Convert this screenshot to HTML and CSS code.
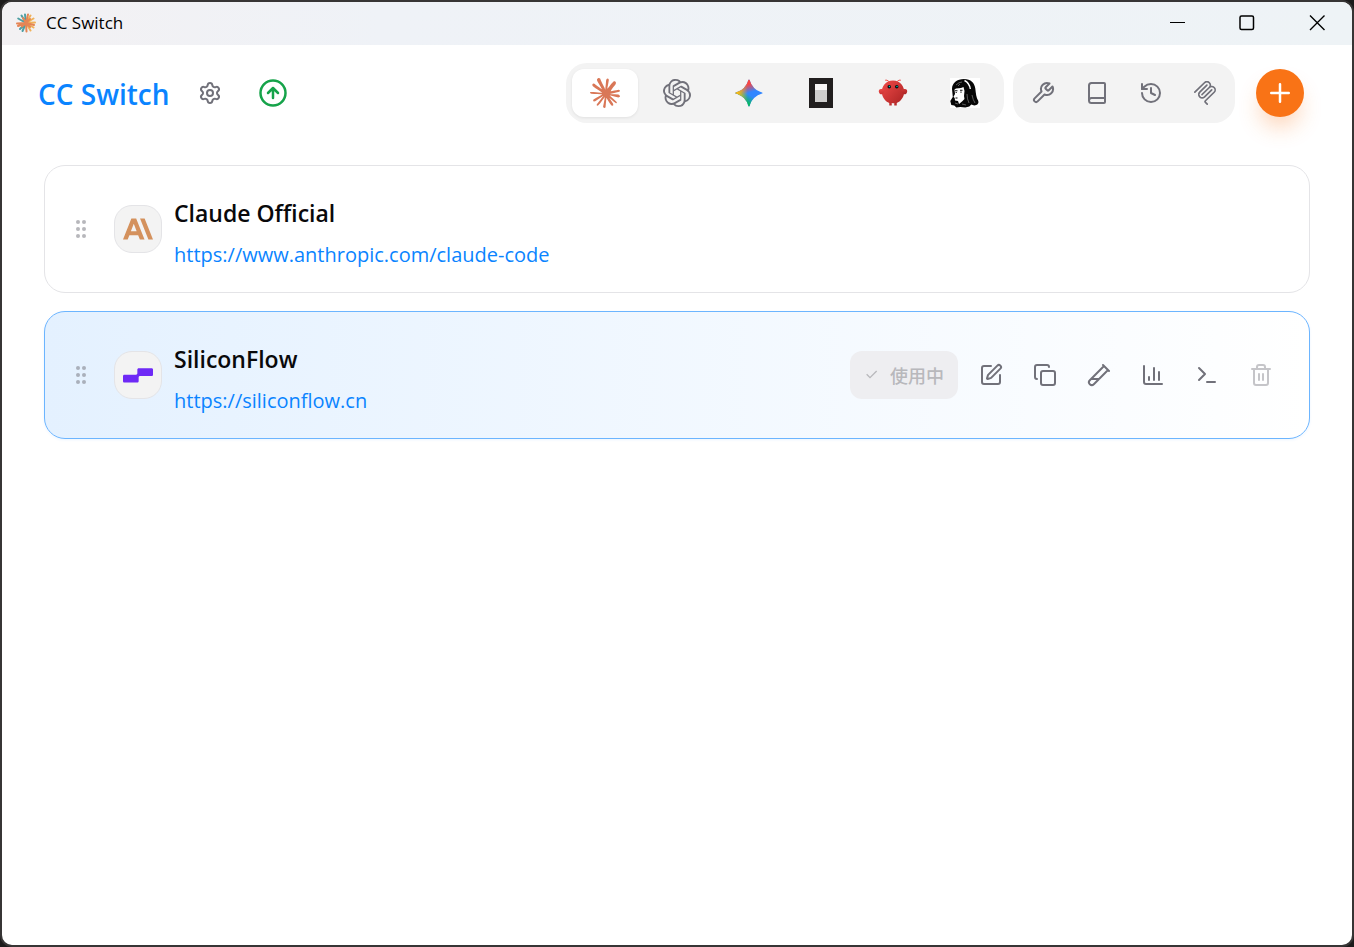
FILE: index.html
```
<!DOCTYPE html>
<html lang="zh-CN">
<head>
<meta charset="utf-8">
<title>CC Switch</title>
<link rel="stylesheet" href="styles.css">
</head>
<body>
<div class="window">
  <div class="titlebar">
    <svg class="app-icon" viewBox="0 0 20 20" fill="none" stroke-width="2" stroke-linecap="round">
      <path stroke="#4f9fa3" d="M10 10 9 1.500M10 10 5.500 2.500M10 10 2.200 5.500M10 10 4 16M10 10 6.500 18"/>
      <path stroke="#f0b25a" d="M10 10 14.500 2.500M10 10 17.500 5.500M10 10 19 9.500M10 10 17.500 14.500M10 10 14.500 17.500"/>
      <path stroke="#e58555" d="M10 10 12 1.500M10 10 1 10.500M10 10 2 13M10 10 10.500 18.500M10 10 18 12M10 10 7 5M10 10 14 6M10 10 6 13.500M10 10 14 14"/>
    </svg>
    <span class="titlebar-text">CC Switch</span>
    <div class="window-controls">
      <button type="button" class="win-btn" aria-label="Minimize"><svg viewBox="0 0 16 16"><path d="M1 7.500h15"/></svg></button>
      <button type="button" class="win-btn" aria-label="Maximize"><svg viewBox="0 0 16 16"><rect x="1" y="1" width="13.500" height="13.500" rx="1.500" stroke-width="1.500"/></svg></button>
      <button type="button" class="win-btn" aria-label="Close"><svg viewBox="0 0 16 16"><path stroke-width="1.400" d="M1 .5l14.500 14.500M15.500 .5 1 15"/></svg></button>
    </div>
  </div>

  <header class="header">
    <a class="brand" href="#">CC Switch</a>
    <button type="button" class="icon-btn" aria-label="Settings">
      <svg class="line" viewBox="0 0 24 24"><path d="M9.671 4.136a2.340 2.340 0 0 1 4.659 0 2.340 2.340 0 0 0 3.319 1.915 2.340 2.340 0 0 1 2.330 4.033 2.340 2.340 0 0 0 0 3.831 2.340 2.340 0 0 1-2.330 4.033 2.340 2.340 0 0 0-3.319 1.915 2.340 2.340 0 0 1-4.659 0 2.340 2.340 0 0 0-3.320-1.915 2.340 2.340 0 0 1-2.330-4.033 2.340 2.340 0 0 0 0-3.831A2.340 2.340 0 0 1 6.350 6.051a2.340 2.340 0 0 0 3.319-1.915"/><circle cx="12" cy="12" r="3"/></svg>
    </button>
    <button type="button" class="icon-btn update" aria-label="Update">
      <svg class="line large" viewBox="0 0 24 24"><circle cx="12" cy="12" r="10"/><path d="m16 12-4-4-4 4M12 16V8"/></svg>
    </button>

    <nav class="group apps" aria-label="Apps">
      <button type="button" class="app-tab active" aria-label="Claude">
        <svg class="logo" viewBox="0 0 24 24" fill="#d97757"><path d="m4.7144 15.9555 4.7174-2.6471.079-.2307-.079-.1275h-.2307l-.7893-.0486-2.6956-.0729-2.3375-.0971-2.2646-.1214-.5707-.1215-.5343-.7042.0546-.3522.4797-.3218.686.0608 1.5179.1032 2.2767.1578 1.6514.0972 2.4468.255h.3886l.0546-.1579-.1336-.0971-.1032-.0972L6.973 9.8356l-2.55-1.6879-1.3356-.9714-.7225-.4918-.3643-.4614-.1578-1.0078.6557-.7225.8803.0607.2246.0607.8925.686 1.9064 1.4754 2.4893 1.8336.3643.3035.1457-.1032.0182-.0728-.164-.2733-1.3539-2.4467-1.445-2.4893-.6435-1.032-.17-.6194c-.0607-.255-.1032-.4674-.1032-.7285L6.287.1335 6.6997 0l.9957.1336.419.3642.6192 1.4147 1.0018 2.2282 1.5543 3.0296.4553.8985.2429.8318.091.255h.1579v-.1457l.1275-1.706.2368-2.0947.2307-2.6957.0789-.7589.3764-.9107.7468-.4918.5828.2793.4797.686-.0668.4433-.2853 1.8517-.5586 2.9021-.3643 1.9429h.2125l.2429-.2429.9835-1.3053 1.6514-2.0643.7286-.8196.85-.9046.5464-.4311h1.0321l.759 1.1293-.34 1.1657-1.0625 1.3478-.8804 1.1414-1.2628 1.7-.7893 1.36.0729.1093.1882-.0183 2.8535-.607 1.5421-.2794 1.8396-.3157.8318.3886.091.3946-.3278.8075-1.967.4857-2.3072.4614-3.4364.8136-.0425.0304.0486.0607 1.5482.1457.6618.0364h1.621l3.0175.2247.7892.522.4736.6376-.079.4857-1.2142.6193-1.6393-.3886-3.825-.9107-1.3113-.3279h-.1822v.1093l1.0929 1.0686 2.0035 1.8092 2.5075 2.3314.1275.5768-.3218.4554-.34-.0486-2.2039-1.6575-.85-.7468-1.9246-1.621h-.1275v.17l.4432.6496 2.3436 3.5214.1214 1.0807-.17.3521-.6071.2125-.6679-.1214-1.3721-1.9246L14.38 17.959l-1.1414-1.9428-.1397.079-.674 7.2552-.3156.3703-.7286.2793-.6071-.4614-.3218-.7468.3218-1.4753.3886-1.9246.3157-1.53.2853-1.9004.17-.6314-.0121-.0425-.1397.0182-1.4328 1.9672-2.1796 2.9446-1.7243 1.8456-.4128.164-.7164-.3704.0667-.6618.4008-.5889 2.386-3.0357 1.4389-1.882.929-1.0868-.0062-.1579h-.0546l-6.3385 4.1164-1.1293.1457-.4857-.4554.0608-.7467.2307-.2429 1.9064-1.3114Z"/></svg>
      </button>
      <button type="button" class="app-tab" aria-label="Codex">
        <svg class="logo" viewBox="-.8 -.8 25.600 25.600" fill="currentColor"><path d="M22.2819 9.8211a5.9847 5.9847 0 0 0-.5157-4.9108 6.0462 6.0462 0 0 0-6.5098-2.9A6.0651 6.0651 0 0 0 4.9807 4.1818a5.9847 5.9847 0 0 0-3.9977 2.9 6.0462 6.0462 0 0 0 .7427 7.0966 5.98 5.98 0 0 0 .511 4.9107 6.051 6.051 0 0 0 6.5146 2.9001A5.9847 5.9847 0 0 0 13.2599 24a6.0557 6.0557 0 0 0 5.7718-4.2058 5.9894 5.9894 0 0 0 3.9977-2.9001 6.0557 6.0557 0 0 0-.7475-7.073zm-9.022 12.6081a4.4755 4.4755 0 0 1-2.8764-1.0408l.1419-.0804 4.7783-2.7582a.7948.7948 0 0 0 .3927-.6813v-6.7369l2.02 1.1686a.071.071 0 0 1 .038.052v5.5826a4.504 4.504 0 0 1-4.4945 4.4944zm-9.6607-4.1254a4.4708 4.4708 0 0 1-.5346-3.0137l.142.0852 4.783 2.7582a.7712.7712 0 0 0 .7806 0l5.8428-3.3685v2.3324a.0804.0804 0 0 1-.0332.0615L9.74 19.9502a4.4992 4.4992 0 0 1-6.1408-1.6464zM2.3408 7.8956a4.485 4.485 0 0 1 2.3655-1.9728V11.6a.7664.7664 0 0 0 .3879.6765l5.8144 3.3543-2.0201 1.1685a.0757.0757 0 0 1-.071 0l-4.8303-2.7865A4.504 4.504 0 0 1 2.3408 7.872zm16.5963 3.8558L13.1038 8.364 15.1192 7.2a.0757.0757 0 0 1 .071 0l4.8303 2.7913a4.4944 4.4944 0 0 1-.6765 8.1042v-5.6772a.79.79 0 0 0-.407-.667zm2.0107-3.0231l-.142-.0852-4.7735-2.7818a.7759.7759 0 0 0-.7854 0L9.409 9.2297V6.8974a.0662.0662 0 0 1 .0284-.0615l4.8303-2.7866a4.4992 4.4992 0 0 1 6.6802 4.66zM8.3065 12.863l-2.02-1.1638a.0804.0804 0 0 1-.038-.0567V6.0742a4.4992 4.4992 0 0 1 7.3757-3.4537l-.142.0805L8.704 5.459a.7948.7948 0 0 0-.3927.6813zm1.0976-2.3654l2.602-1.4998 2.6069 1.4998v2.9994l-2.5974 1.4997-2.6067-1.4997Z"/></svg>
      </button>
      <button type="button" class="app-tab" aria-label="Gemini">
        <svg class="logo" viewBox="-.2 -.2 24.400 24.400">
          <defs>
            <linearGradient id="gm-g" x1="9" y1="19" x2="12.500" y2="13.500" gradientUnits="userSpaceOnUse"><stop stop-color="#08b962"/><stop offset="1" stop-color="#08b962" stop-opacity="0"/></linearGradient>
            <linearGradient id="gm-r" x1="11" y1="5" x2="13" y2="11.500" gradientUnits="userSpaceOnUse"><stop stop-color="#f94543"/><stop offset="1" stop-color="#f94543" stop-opacity="0"/></linearGradient>
            <linearGradient id="gm-y" x1="3" y1="12" x2="11" y2="12" gradientUnits="userSpaceOnUse"><stop stop-color="#fabc12"/><stop offset="1" stop-color="#fabc12" stop-opacity="0"/></linearGradient>
            <path id="gm" d="M20.616 10.835a14.147 14.147 0 01-4.450-3.001 14.111 14.111 0 01-3.678-6.452.503.503 0 00-.975 0 14.134 14.134 0 01-3.679 6.452 14.155 14.155 0 01-4.450 3.001c-.650.280-1.318.505-2.002.678a.502.502 0 000 .975c.684.172 1.350.397 2.002.677a14.147 14.147 0 014.450 3.001 14.112 14.112 0 013.679 6.453.502.502 0 00.975 0c.172-.685.397-1.351.677-2.003a14.145 14.145 0 013.001-4.450 14.113 14.113 0 016.453-3.678.503.503 0 000-.975 13.245 13.245 0 01-2.003-.678z"/>
          </defs>
          <use href="#gm" fill="#3186ff"/>
          <use href="#gm" fill="url(#gm-g)"/>
          <use href="#gm" fill="url(#gm-r)"/>
          <use href="#gm" fill="url(#gm-y)"/>
        </svg>
      </button>
      <button type="button" class="app-tab" aria-label="OpenCode">
        <svg class="logo" viewBox="0 0 30 30"><path fill="#211e1e" d="M3 0h24v30H3z"/><path fill="#f7f5f5" d="M9 6h12v6H9z"/><path fill="#cfcecd" d="M9 12h12v12H9z"/></svg>
      </button>
      <button type="button" class="app-tab" aria-label="OpenClaw">
        <svg class="logo" viewBox="0 0 120 120">
          <defs><linearGradient id="claw" x1="0" y1="0" x2="1" y2="1"><stop stop-color="#f04a48"/><stop offset="1" stop-color="#a82222"/></linearGradient></defs>
          <path fill="url(#claw)" d="M60 10C30 10 15 35 15 55s15 40 30 45v10h10v-10s5 2 10 0v10h10v-10c15-5 30-25 30-45S90 10 60 10Z"/>
          <path fill="url(#claw)" d="M20 45C5 40 0 50 5 60s15 5 20-5c3-7 0-10-5-10ZM100 45c15-5 20 5 15 15s-15 5-20-5c-3-7 0-10 5-10Z"/>
          <path fill="none" stroke="#f0504d" stroke-width="4" stroke-linecap="round" d="M45 15Q35 5 30 8M75 15q10-10 15-7"/>
          <circle cx="45" cy="35" r="7" fill="#050810"/><circle cx="75" cy="35" r="7" fill="#050810"/>
          <circle cx="46" cy="34" r="3" fill="#00c8b8"/><circle cx="76" cy="34" r="3" fill="#00c8b8"/>
        </svg>
      </button>
      <button type="button" class="app-tab" aria-label="Hermes">
        <svg class="logo" viewBox="0 0 30 30">
          <path fill="#fff" d="M0 0h30v30H0z"/>
          <path fill="#080808" d="M2 11C2 5 7 1 14 1c7 0 10.500 4 11.300 9.500.6 5 .8 9 3 12.500.6 2-.5 3.500-2 4l-2 .5-3-1-2 2-4 1-5-.5-4 .5-2-2-3-.5-1-4 2.500-4z"/>
          <path fill="#fff" d="M4.500 11.500 6 10.500l5-.5 2.500-1 1 4-.5 5 .5 3-2.500 2.500L9 26l-1-3-3-.500-.3-2.500-1.200-1.200L5 16z"/>
          <path fill="none" stroke="#111" stroke-width="1.100" d="M5 12.800h2.500M10 12.300h2.500M6.200 14v1M11 13.500v1.200M5.500 20h2"/>
          <path fill="none" stroke="#fff" stroke-width="1.400" d="M14.500 2.500Q19.500 5 20.300 11"/>
          <path fill="none" stroke="#999" stroke-width=".6" d="M6 7q3-3 6-3M17 16q0 5 2 9M22 17q1 5 3 8M8 8l2-2M5 25l3 1M12 26l4 1"/>
        </svg>
      </button>
    </nav>

    <div class="group tools">
      <button type="button" class="tool-btn" aria-label="Skills"><svg class="line" viewBox="0 0 24 24"><path d="M14.700 6.300a1 1 0 0 0 0 1.400l1.600 1.600a1 1 0 0 0 1.400 0l3.770-3.770a6 6 0 0 1-7.940 7.940l-6.910 6.910a2.120 2.120 0 0 1-3-3l6.910-6.910a6 6 0 0 1 7.940-7.940l-3.760 3.760z"/></svg></button>
      <button type="button" class="tool-btn" aria-label="Prompts"><svg class="line" viewBox="0 0 24 24"><path d="M4 19.500v-15A2.500 2.500 0 0 1 6.500 2H19a1 1 0 0 1 1 1v18a1 1 0 0 1-1 1H6.500a1 1 0 0 1 0-5H20"/></svg></button>
      <button type="button" class="tool-btn" aria-label="History"><svg class="line" viewBox="0 0 24 24"><path d="M3 12a9 9 0 1 0 9-9 9.750 9.750 0 0 0-6.740 2.740L3 8"/><path d="M3 3v5h5M12 7v5l4 2"/></svg></button>
      <button type="button" class="tool-btn" aria-label="MCP"><svg class="solid" viewBox="0 0 24 24"><path d="M15.688 2.343a2.588 2.588 0 00-3.610 0l-9.626 9.440a.863.863 0 01-1.203 0 .823.823 0 010-1.180l9.626-9.440a4.313 4.313 0 016.016 0 4.116 4.116 0 011.204 3.540 4.300 4.300 0 013.609 1.180l.050.050a4.115 4.115 0 010 5.900l-8.706 8.537a.274.274 0 000 .393l1.788 1.754a.823.823 0 010 1.180.863.863 0 01-1.203 0l-1.788-1.753a1.920 1.920 0 010-2.754l8.706-8.538a2.470 2.470 0 000-3.540l-.050-.049a2.588 2.588 0 00-3.607-.003l-7.172 7.034-.002.002-.098.097a.863.863 0 01-1.204 0 .823.823 0 010-1.180l7.273-7.133a2.470 2.470 0 00-.003-3.537z"/><path d="M14.485 4.703a.823.823 0 000-1.180.863.863 0 00-1.204 0l-7.119 6.982a4.115 4.115 0 000 5.900 4.314 4.314 0 006.016 0l7.120-6.982a.823.823 0 000-1.180.863.863 0 00-1.204 0l-7.119 6.982a2.588 2.588 0 01-3.610 0 2.470 2.470 0 010-3.540l7.120-6.982z"/></svg></button>
    </div>

    <button type="button" class="add-btn" aria-label="Add provider"><svg class="line large" viewBox="0 0 24 24"><path d="M5 12h14M12 5v14"/></svg></button>
  </header>

  <main class="providers">
    <article class="card">
      <svg class="grip" viewBox="0 0 24 24"><circle cx="9" cy="5" r="2"/><circle cx="9" cy="12" r="2"/><circle cx="9" cy="19" r="2"/><circle cx="15" cy="5" r="2"/><circle cx="15" cy="12" r="2"/><circle cx="15" cy="19" r="2"/></svg>
      <div class="provider-icon"><svg class="logo" viewBox="0 0 24 24" fill="#d4915d"><path d="M17.3041 3.541h-3.6718l6.696 16.918H24Zm-10.6082 0L0 20.459h3.7442l1.3693-3.5527h7.0052l1.3693 3.5528h3.7442L10.5363 3.5409Zm-.3712 10.2232 2.2914-5.9456 2.2914 5.9456Z"/></svg></div>
      <div class="info">
        <h3 class="name">Claude Official</h3>
        <a class="url" href="https://www.anthropic.com/claude-code">https://www.anthropic.com/claude-code</a>
      </div>
    </article>

    <article class="card current">
      <svg class="grip" viewBox="0 0 24 24"><circle cx="9" cy="5" r="2"/><circle cx="9" cy="12" r="2"/><circle cx="9" cy="19" r="2"/><circle cx="15" cy="5" r="2"/><circle cx="15" cy="12" r="2"/><circle cx="15" cy="19" r="2"/></svg>
      <div class="provider-icon"><svg class="logo" viewBox="0 0 24 24" fill="#6e29f6"><path d="M22.956 6.521H12.522c-.577 0-1.044.468-1.044 1.044v3.130c0 .577-.466 1.044-1.043 1.044H1.044c-.577 0-1.044.467-1.044 1.044v4.174C0 17.533.467 18 1.044 18h10.434c.577 0 1.044-.467 1.044-1.043v-3.130c0-.578.466-1.044 1.043-1.044h9.391c.577 0 1.044-.467 1.044-1.044V7.565c0-.576-.467-1.044-1.044-1.044z"/></svg></div>
      <div class="info">
        <h3 class="name">SiliconFlow</h3>
        <a class="url" href="https://siliconflow.cn">https://siliconflow.cn</a>
      </div>
      <div class="actions">
        <button type="button" class="in-use" disabled><svg viewBox="0 0 24 24"><path d="M19 6 9 16l-5-5"/></svg>使用中</button>
        <div class="action-row">
          <button type="button" class="tool-btn" aria-label="Edit"><svg class="line" viewBox="0 0 24 24"><path d="M12 3H5a2 2 0 0 0-2 2v14a2 2 0 0 0 2 2h14a2 2 0 0 0 2-2v-7"/><path d="M18.375 2.625a1 1 0 0 1 3 3l-9.013 9.014a2 2 0 0 1-.853.505l-2.873.840a.5.5 0 0 1-.620-.620l.840-2.873a2 2 0 0 1 .506-.852z"/></svg></button>
          <button type="button" class="tool-btn" aria-label="Duplicate"><svg class="line" viewBox="0 0 24 24"><rect x="8" y="8" width="14" height="14" rx="2"/><path d="M4 16c-1.100 0-2-.900-2-2V4c0-1.100.900-2 2-2h10c1.100 0 2 .900 2 2"/></svg></button>
          <button type="button" class="tool-btn" aria-label="Test"><svg class="line" viewBox="0 0 24 24"><path d="M21 7 6.820 21.180a2.830 2.830 0 0 1-3.990-.010a2.830 2.830 0 0 1 0-4L17 3M16 2l6 6M12 16H4"/></svg></button>
          <button type="button" class="tool-btn" aria-label="Usage"><svg class="line" viewBox="0 0 24 24"><path d="M3 3v16a2 2 0 0 0 2 2h16M18 17V9M13 17V5M8 17v-3"/></svg></button>
          <button type="button" class="tool-btn" aria-label="Terminal"><svg class="line" viewBox="0 0 24 24"><path d="m4 17 6-6-6-6M12 19h8"/></svg></button>
          <button type="button" class="tool-btn" aria-label="Delete" disabled><svg class="line" viewBox="0 0 24 24"><path d="M3 6h18M19 6v14c0 1-1 2-2 2H7c-1 0-2-1-2-2V6M8 6V4c0-1 1-2 2-2h4c1 0 2 1 2 2v2M10 11v6M14 11v6"/></svg></button>
        </div>
      </div>
    </article>
  </main>
</div>
</body>
</html>
```
FILE: styles.css
```
* { box-sizing: border-box; }

body {
  margin: 0;
  background: #1c1b1b;
  font-family: "Open Sans", "Noto Sans", "Noto Sans CJK SC", sans-serif;
  color: #09090b;
}

button {
  display: flex;
  align-items: center;
  justify-content: center;
  margin: 0;
  padding: 0;
  border: 0;
  background: none;
  color: #71717a;
  font-family: inherit;
}

svg { display: block; flex: none; }
a { text-decoration: none; }

.window {
  display: flex;
  flex-direction: column;
  min-height: 100vh;
  border: 2px solid #373535;
  border-radius: 12px;
  background: #fff;
  overflow: hidden;
}

.titlebar {
  display: flex;
  align-items: center;
  height: 43px;
  padding: 0 0 2px 14px;
  background: linear-gradient(90deg, #f3f1f3, #eff2f7 28%, #eef3f6);
}

.app-icon { width: 20px; height: 20px; }
.titlebar-text { margin-left: 10px; font-size: 17px; line-height: 24px; color: #000; }
.window-controls { display: flex; margin-left: auto; }
.win-btn { width: 70px; height: 40px; }
.win-btn svg { width: 16px; height: 16px; fill: none; stroke: #000; stroke-width: 1; }

.header {
  display: flex;
  align-items: center;
  padding: 18px 48px 18px 36px;
}

.brand { margin-right: 16px; padding-top: 2px; font-size: 28px; line-height: 42px; font-weight: 600; color: #0a84ff; }

.icon-btn { width: 48px; height: 48px; }
.update { margin-left: 15px; color: #16a34a; }

.line { width: 24px; height: 24px; fill: none; stroke: currentColor; stroke-width: 2; stroke-linecap: round; stroke-linejoin: round; }
.line.large { width: 30px; height: 30px; }
.solid { width: 24px; height: 24px; fill: currentColor; }
.logo { width: 30px; height: 30px; }

.group { display: flex; gap: 6px; padding: 6px; border-radius: 21px; background: #f3f3f3; }
.apps { margin-left: auto; }
.tools { margin-left: 9px; }

.app-tab { width: 66px; height: 48px; border-radius: 12px; }
.app-tab.active { background: #fff; box-shadow: 0 1px 3px rgba(0, 0, 0, .08); }

.tool-btn { width: 48px; height: 48px; }
.tool-btn:disabled { opacity: .4; }

.add-btn {
  width: 48px;
  height: 48px;
  margin-left: 21px;
  border-radius: 50%;
  background: #f97316;
  color: #fff;
  box-shadow: 0 14px 22px -4px rgba(249, 115, 22, .3);
}

.providers { display: flex; flex-direction: column; gap: 18px; padding: 24px 42px; }

.card {
  display: flex;
  align-items: center;
  min-height: 128px;
  padding: 20px 24px;
  border: 1px solid #e4e4e7;
  border-radius: 21px;
}

.current {
  border-color: #6cb5ff;
  background: linear-gradient(90deg, #e4f1ff, #fff);
  box-shadow: 0 1px 3px rgba(10, 132, 255, .08);
}

.grip { width: 24px; height: 24px; fill: #71717a; opacity: .5; }

.provider-icon {
  display: grid;
  place-items: center;
  width: 48px;
  height: 48px;
  margin: 0 12px 0 21px;
  border: 1px solid #e4e4e7;
  border-radius: 18px;
  background: #f3f3f3;
}

.info { display: flex; flex-direction: column; align-items: flex-start; gap: 6px; padding-top: 3px; }
.name { margin: 0; font-size: 23px; line-height: 42px; font-weight: 600; }
.url { font-size: 20px; line-height: 30px; color: #0a84ff; }

.actions { display: flex; align-items: center; gap: 9px; margin-left: auto; }
.action-row { display: flex; gap: 6px; }

.in-use {
  gap: 10px;
  height: 48px;
  padding: 0 14px;
  border-radius: 12px;
  background: #eeeef1;
  color: #b8b8bc;
  font-family: "Noto Sans CJK SC", sans-serif;
  font-size: 18px;
  line-height: 27px;
  font-weight: 500;
}

.in-use svg { width: 16px; height: 16px; fill: none; stroke: currentColor; stroke-width: 2; }
```
